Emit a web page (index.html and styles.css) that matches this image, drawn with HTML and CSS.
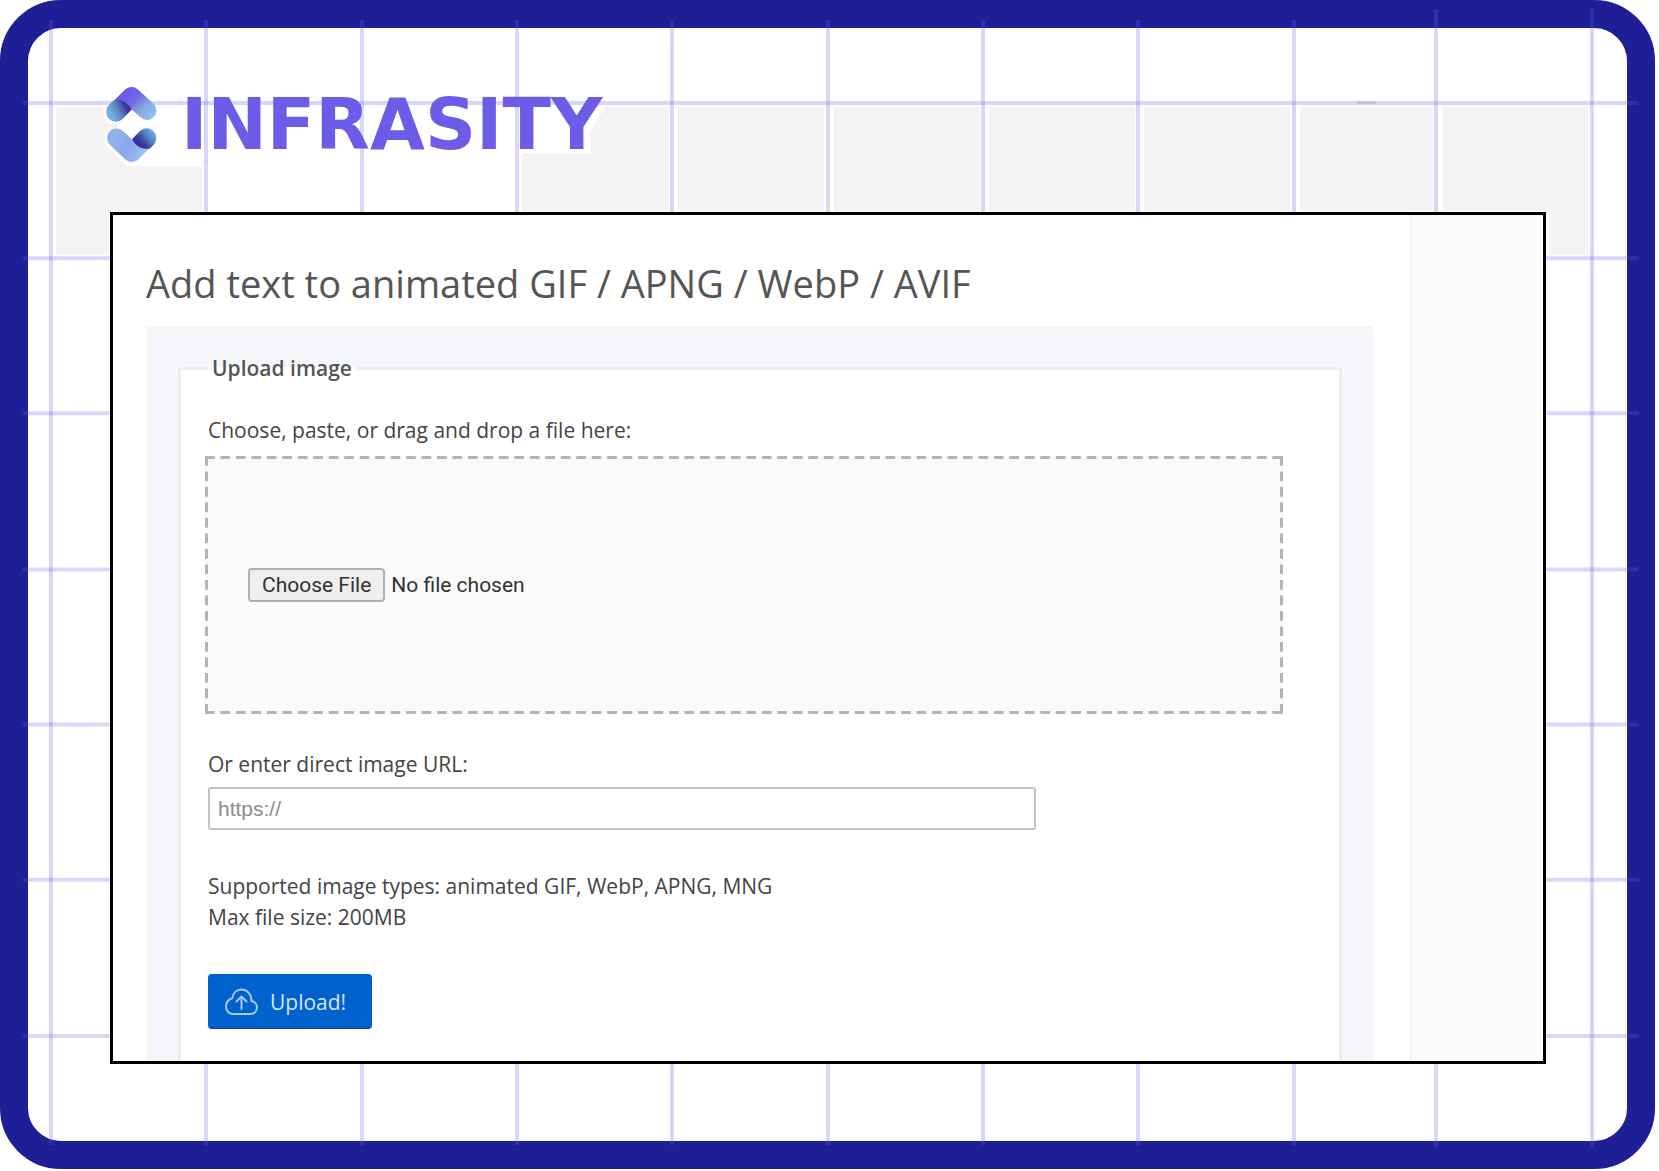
FILE: index.html
```html
<!DOCTYPE html>
<html lang="en">
<head>
<meta charset="utf-8">
<meta name="viewport" content="width=device-width, initial-scale=1">
<title>Infrasity - Add text to animated GIF</title>
<link rel="stylesheet" href="styles.css">
</head>
<body>
<div class="frame">
  <svg class="grid" viewBox="0 0 1655 1168" preserveAspectRatio="none" aria-hidden="true">
    <g fill="#f4f2f2">
      <path d="M56 107H103L104 118 110 124H118V129L105 133V144L127 166H202V211H109V255H56Z"/>
      <path d="M605 107H669V211H522V153H590V132Z"/>
      <path d="M678 107H824V211H678ZM834 107H980V211H834ZM989 107H1135V211H989ZM1144 107H1290V211H1144ZM1300 107H1433V211H1300ZM1443 107H1588V255H1549V211H1443Z"/>
    </g>
    <g stroke="#6c5ce7" stroke-opacity="0.25" stroke-width="4">
      <path d="M51 20V1144M206 20V1144M362 20V1144M517 20V1144M672 20V1144M828 20V1144M983 20V1144M1138 20V1144M1294 20V1144M1436 9V1146M1592 9V1146"/>
      <path d="M23 103H1639M23 258H1639M23 413H1639M23 569H1639M23 724H1639M23 879H1639M23 1035H1639"/>
    </g>
    <path d="M1357 101H1376V104H1357Z" fill="#c4bfe6"/>
  </svg>

  <header class="brand">
    <svg class="brand-mark" viewBox="0 0 54 79" aria-hidden="true">
      <defs>
        <linearGradient id="roof" gradientUnits="userSpaceOnUse" x1="24" y1="8" x2="46" y2="30">
          <stop offset="0" stop-color="#6c5ce7"/><stop offset="0.3" stop-color="#7468e2"/><stop offset="0.65" stop-color="#84a8e2"/><stop offset="1" stop-color="#8fbdec"/>
        </linearGradient>
        <linearGradient id="roofFold" gradientUnits="userSpaceOnUse" x1="6" y1="30" x2="26" y2="19">
          <stop offset="0" stop-color="#76aee4"/><stop offset="0.4" stop-color="#5b82c0"/><stop offset="0.75" stop-color="#37379a"/><stop offset="1" stop-color="#2f27a8"/>
        </linearGradient>
        <linearGradient id="base" gradientUnits="userSpaceOnUse" x1="8" y1="50" x2="44" y2="66">
          <stop offset="0" stop-color="#90b4ea"/><stop offset="0.45" stop-color="#8ea6ec"/><stop offset="0.7" stop-color="#90b4ea"/><stop offset="1" stop-color="#9fd2f2"/>
        </linearGradient>
        <linearGradient id="baseFold" gradientUnits="userSpaceOnUse" x1="31" y1="60" x2="47" y2="47">
          <stop offset="0" stop-color="#2f27a8"/><stop offset="0.35" stop-color="#37409a"/><stop offset="0.7" stop-color="#5484c0"/><stop offset="1" stop-color="#62a4e0"/>
        </linearGradient>
      </defs>
      <path d="M11 27 26.500 11.500 42 25.500" fill="none" stroke="url(#roof)" stroke-width="19" stroke-linecap="round" stroke-linejoin="round"/>
      <path d="M26.500 24.500 18 33.500A9.700 9.700 0 0 1 4 20L8.500 15.500C15 13 22 17 26.500 24.500Z" fill="url(#roofFold)"/>
      <path d="M11.500 53 27 67.500 42 52.500" fill="none" stroke="url(#base)" stroke-width="19" stroke-linecap="round" stroke-linejoin="round"/>
      <path d="M27.300 54.300 35 46A9.800 9.800 0 0 1 49 59.500L45 63.500C38 65 31 62 27.300 54.300Z" fill="url(#baseFold)"/>
    </svg>
    <span class="brand-name">INFRASITY</span>
  </header>

  <main class="panel">
    <div class="content">
      <h1 class="title">Add text to animated GIF / APNG / WebP / AVIF</h1>
      <form class="upload-form">
        <fieldset class="upload-box">
          <legend class="legend">Upload image</legend>
          <label class="label" for="file">Choose, paste, or drag and drop a file here:</label>
          <div class="dropzone"><input class="file" type="file" id="file"></div>
          <label class="label" for="url">Or enter direct image URL:</label>
          <input class="url" type="text" id="url" placeholder="https://">
          <p class="hint">Supported image types: animated GIF, WebP, APNG, MNG<br>Max file size: 200MB</p>
          <button class="upload" type="submit">
            <svg class="cloud" viewBox="0 0 33 28" aria-hidden="true" fill="none" stroke="currentColor" stroke-width="2" stroke-linecap="round" stroke-linejoin="round">
              <path d="M8 26H25.500C29.500 26 32 23 32 19.500C32 16 29.500 13.500 26.500 13C26.500 6 22 1.500 16.500 1.500C11.500 1.500 8 5 7.500 10C3.500 11.500 1 14.500 1 18.500C1 23 4 26 8 26Z"/>
              <path d="M16.500 21V9M11.500 13.500 16.500 8.500 21.500 13.500"/>
            </svg>
            Upload!
          </button>
        </fieldset>
      </form>
    </div>
    <div class="texture"></div>
  </main>
</div>
</body>
</html>
```
FILE: styles.css
```css
* {
  box-sizing: border-box;
}

body {
  margin: 0;
  padding: 0 4px 3px 0;
  background: #fff;
  color: #444;
  font: 21px/31px "Open Sans", "Noto Sans", sans-serif;
}

.frame {
  position: relative;
  isolation: isolate;
  border: 28px solid #1e1e96;
  border-radius: 61px;
  padding: 57px 81px 77px 82px;
}

/* decorative grid, painted over the frame's border and under the content */
.grid {
  position: absolute;
  top: -28px;
  left: -28px;
  z-index: -1;
  width: calc(100% + 56px);
  height: calc(100% + 56px);
}

.brand {
  display: flex;
  align-items: center;
  gap: 22px;
  margin-bottom: 48px;
  margin-left: -5px;
}

.brand-mark {
  width: 54px;
  height: 79px;
}

.brand-name {
  color: #6c5ce7;
  font: 700 71px/79px "DejaVu Sans", sans-serif;
}

.panel {
  display: flex;
  border: 3px solid #000;
  background: #fff;
}

.content {
  flex: 1;
  min-width: 0;
  padding: 42px 37px 0 33px;
}

.title {
  margin: 0 0 17px;
  color: #555;
  font-size: 38px;
  line-height: 52px;
  font-weight: 400;
}

.upload-form {
  padding: 27px 31px 0 32px;
  background: #f4f6fa;
}

.upload-box {
  margin: 0;
  min-width: 0;
  padding: 32px 56px 32px 27px;
  border: 3px solid #ebeeed;
  border-bottom: 0;
  border-radius: 4px 4px 0 0;
  background: #fff;
}

.legend {
  padding: 0 4px;
  color: #555;
  font-weight: 600;
  line-height: 30px;
}

.label {
  display: block;
}

.dropzone {
  --dash: #b4b4b4 10px, transparent 10px;
  display: flex;
  align-items: center;
  min-height: 258px;
  margin: 10px 0 35px -3px;
  padding: 0 43px;
  background:
    linear-gradient(90deg, var(--dash)) 0 0 / calc((100% - 10px) / 69) 3px repeat-x,
    linear-gradient(90deg, var(--dash)) 0 100% / calc((100% - 10px) / 69) 3px repeat-x,
    linear-gradient(var(--dash)) 0 0 / 3px calc((100% - 10px) / 16) repeat-y,
    linear-gradient(var(--dash)) 100% 0 / 3px calc((100% - 10px) / 16) repeat-y,
    #fafafa;
}

.file {
  width: 100%;
  color: #333;
  font: 21px/24px Roboto, sans-serif;
}

.file::file-selector-button {
  height: 34px;
  margin: 0 6px 0 0;
  padding: 0 12px;
  border: 2px solid #b0b0b0;
  border-radius: 4px;
  background: #eee;
  color: #333;
  font: inherit;
}

.url {
  display: block;
  width: 77%;
  height: 43px;
  margin: 7px 0 41px;
  padding: 0 8px;
  border: 2px solid #c4c4c4;
  border-radius: 3px;
  background: #fff;
  color: #444;
  font: 21px/31px "Liberation Sans", sans-serif;
}

.url::placeholder {
  color: #8c8c8c;
}

.hint {
  margin: 0 0 41px;
}

.upload {
  display: flex;
  align-items: center;
  gap: 12px;
  height: 55px;
  padding: 2px 26px 0 17px;
  border: 0;
  border-bottom: 1px solid #2a35a8;
  border-radius: 4px;
  background: #0062cc;
  color: #d4e4f8;
  font: 21px/31px "Open Sans", "Noto Sans", sans-serif;
}

.cloud {
  width: 33px;
  height: 28px;
  color: #a4c8f0;
}

.texture {
  flex: 0 0 133px;
  border-left: 1px solid #eee;
  background:
    repeating-linear-gradient(90deg, #f8f9f9 0 1px, transparent 1px 4px),
    repeating-linear-gradient(#f8f9f9 0 1px, transparent 1px 4px),
    #fdfdfd;
}
```
